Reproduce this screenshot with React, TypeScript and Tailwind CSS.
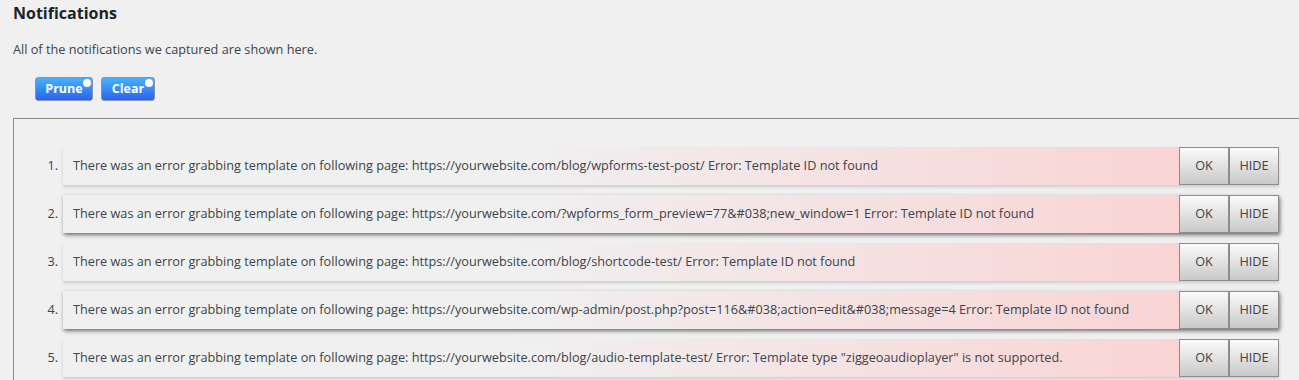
import * as React from "react"

const notices = [
  "There was an error grabbing template on following page: https://yourwebsite.com/blog/wpforms-test-post/ Error: Template ID not found",
  "There was an error grabbing template on following page: https://yourwebsite.com/?wpforms_form_preview=77&#038;new_window=1 Error: Template ID not found",
  "There was an error grabbing template on following page: https://yourwebsite.com/blog/shortcode-test/ Error: Template ID not found",
  "There was an error grabbing template on following page: https://yourwebsite.com/wp-admin/post.php?post=116&#038;action=edit&#038;message=4 Error: Template ID not found",
  "There was an error grabbing template on following page: https://yourwebsite.com/blog/audio-template-test/ Error: Template type \"ziggeoaudioplayer\" is not supported.",
]

function BlueButton({ label, width }: { label: string; width: string }) {
  return (
    <button
      className={`relative h-[24px] ${width} rounded-[3px] border border-[#8a94a3] bg-gradient-to-b from-[#4cb0f9] to-[#2d62ee] text-[12.5px] font-bold text-white`}
    >
      {label}
      <span className="absolute right-[1px] top-[1px] h-[8px] w-[8px] rounded-full bg-white" />
    </button>
  )
}

function GrayButton({ label }: { label: string }) {
  return (
    <button className="h-full w-[50px] border border-[#8c8c8c] bg-gradient-to-b from-[#fbfbfb] to-[#c9c9c9] text-[12.7px] text-[#3c434a]">
      {label}
    </button>
  )
}

export default function App() {
  return (
    <div
      className="h-[380px] w-[1299px] overflow-hidden bg-[#f0f0f0] text-[#3c434a]"
      style={{ fontFamily: '"Open Sans", "Noto Sans", sans-serif' }}
    >
      <h1 className="pl-[13px] pt-[3px] text-[16px] font-bold leading-[20px] text-[#1d2327]">Notifications</h1>
      <p className="pl-[13px] pt-[18px] text-[12.7px] leading-[16px]">All of the notifications we captured are shown here.</p>

      <div className="flex gap-[8px] pl-[35px] pt-[20px]">
        <BlueButton label="Prune" width="w-[58px]" />
        <BlueButton label="Clear" width="w-[54px]" />
      </div>

      <div className="ml-[13px] mt-[17px] w-[1320px] border border-[#8c8c8c] pb-[40px] pt-[28px]">
        <ol className="flex flex-col gap-[10px]">
          {notices.map((text, i) => (
            <li key={i} className="flex items-center">
              <span className="w-[45px] pr-[1px] text-right text-[12.7px]">{i + 1}.</span>
              <div
                className={`ml-[4px] flex h-[38px] w-[1216px] ${
                  i % 2 === 1
                    ? "shadow-[1px_2px_4px_rgba(0,0,0,0.55)]"
                    : "shadow-[0_2px_3px_rgba(0,0,0,0.15)]"
                }`}
              >
                <div className="flex flex-1 items-center bg-gradient-to-r from-[#f0f0f0] from-40% to-[#f9d4d5] pl-[10px] text-[12.7px]">
                  {text}
                </div>
                <GrayButton label="OK" />
                <GrayButton label="HIDE" />
              </div>
            </li>
          ))}
        </ol>
      </div>
    </div>
  )
}
